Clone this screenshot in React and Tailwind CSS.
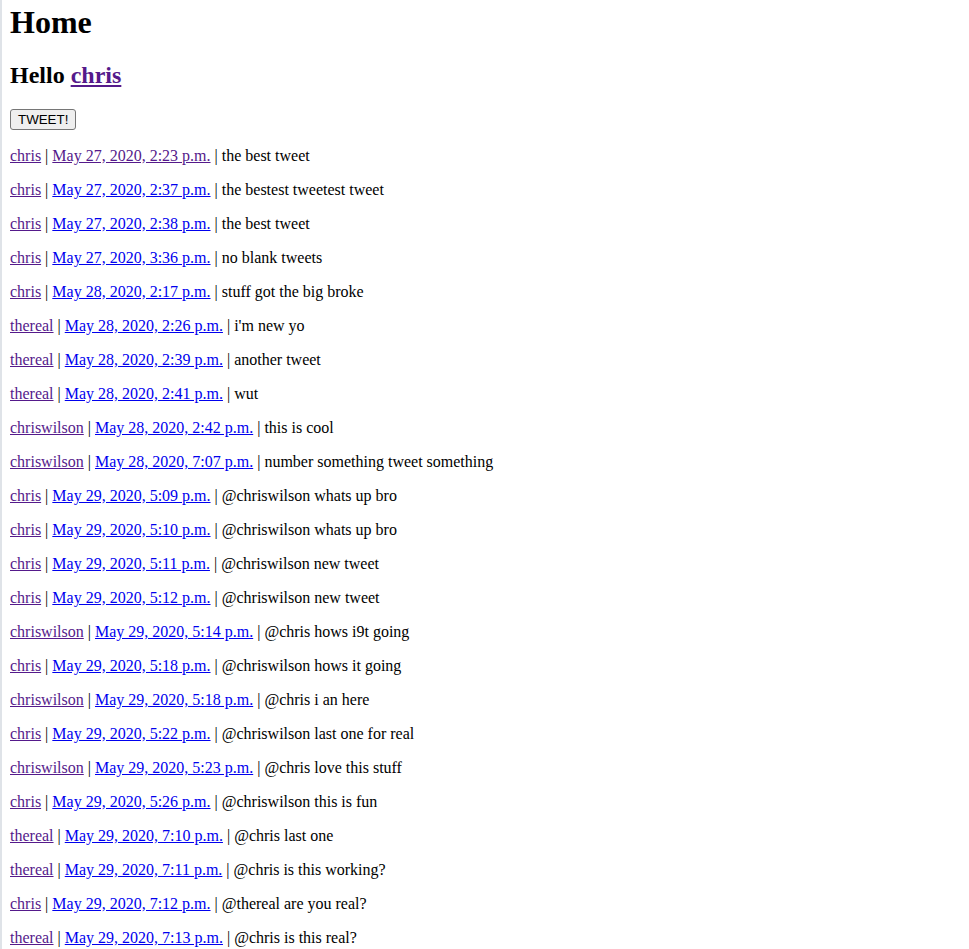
const tweets = [
  ["chris", "May 27, 2020, 2:23 p.m.", "the best tweet", true],
  ["chris", "May 27, 2020, 2:37 p.m.", "the bestest tweetest tweet"],
  ["chris", "May 27, 2020, 2:38 p.m.", "the best tweet"],
  ["chris", "May 27, 2020, 3:36 p.m.", "no blank tweets"],
  ["chris", "May 28, 2020, 2:17 p.m.", "stuff got the big broke"],
  ["thereal", "May 28, 2020, 2:26 p.m.", "i'm new yo"],
  ["thereal", "May 28, 2020, 2:39 p.m.", "another tweet"],
  ["thereal", "May 28, 2020, 2:41 p.m.", "wut"],
  ["chriswilson", "May 28, 2020, 2:42 p.m.", "this is cool"],
  ["chriswilson", "May 28, 2020, 7:07 p.m.", "number something tweet something"],
  ["chris", "May 29, 2020, 5:09 p.m.", "@chriswilson whats up bro"],
  ["chris", "May 29, 2020, 5:10 p.m.", "@chriswilson whats up bro"],
  ["chris", "May 29, 2020, 5:11 p.m.", "@chriswilson new tweet"],
  ["chris", "May 29, 2020, 5:12 p.m.", "@chriswilson new tweet"],
  ["chriswilson", "May 29, 2020, 5:14 p.m.", "@chris hows i9t going"],
  ["chris", "May 29, 2020, 5:18 p.m.", "@chriswilson hows it going"],
  ["chriswilson", "May 29, 2020, 5:18 p.m.", "@chris i an here"],
  ["chris", "May 29, 2020, 5:22 p.m.", "@chriswilson last one for real"],
  ["chriswilson", "May 29, 2020, 5:23 p.m.", "@chris love this stuff"],
  ["chris", "May 29, 2020, 5:26 p.m.", "@chriswilson this is fun"],
  ["thereal", "May 29, 2020, 7:10 p.m.", "@chris last one"],
  ["thereal", "May 29, 2020, 7:11 p.m.", "@chris is this working?"],
  ["chris", "May 29, 2020, 7:12 p.m.", "@thereal are you real?"],
  ["thereal", "May 29, 2020, 7:13 p.m.", "@chris is this real?"],
];

export default function App() {
  return (
    <div className="min-h-[949px] border-l-2 border-[#dfe3e8] pl-2 pt-[4px] text-black font-['Liberation_Serif',serif] text-[16px] bg-white">
      <h1 className="text-[32px] leading-[37px] font-bold">Home</h1>
      <h2 className="mt-[20px] text-[24px] leading-[28px] font-bold">
        Hello{" "}
        <a href="#" className="text-[#551a8b] underline">chris</a>
      </h2>
      <div className="mt-[20px] pb-[1px] flex">
        <button className="h-[21px] px-[7px] bg-[#efefef] border border-[#767676] rounded-[3px] font-['Liberation_Sans',sans-serif] text-[13.33px] leading-[17px] text-black">
          TWEET!
        </button>
      </div>
      {tweets.map(([user, date, text, visited], i) => (
        <p key={i} className="my-4 leading-[18px]">
          <a href="#" className="text-[#551a8b] underline">{user}</a>
          {" | "}
          <a href="#" className={visited ? "text-[#551a8b] underline" : "text-[#0000ee] underline"}>{date}</a>
          {" | "}
          {text}
        </p>
      ))}
    </div>
  );
}
